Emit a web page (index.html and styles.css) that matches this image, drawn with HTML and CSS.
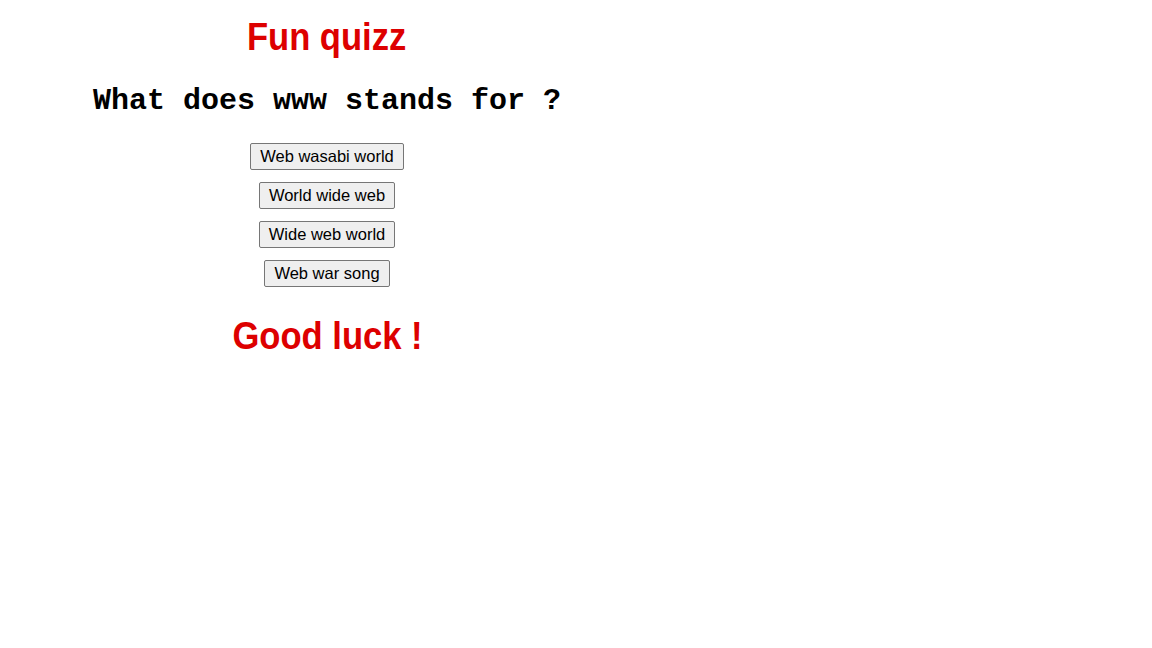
FILE: index.html
```html
<!DOCTYPE html>
<html>
<head>
<meta charset="utf-8">
<link rel="stylesheet" href="styles.css">
</head>
<body>
<div class="quiz">
  <h1 class="title"><span class="title-text">Fun quizz</span></h1>
  <h2 class="question">What does www stands for ?</h2>
  <div class="answers">
    <button class="answer">Web wasabi world</button>
    <button class="answer">World wide web</button>
    <button class="answer">Wide web world</button>
    <button class="answer">Web war song</button>
  </div>
  <h1 class="title luck"><span class="title-text">Good luck !</span></h1>
</div>
</body>
</html>
```
FILE: styles.css
```css
body {
  margin: 8px;
  background: #fff;
  font-family: "Liberation Sans", Arial, sans-serif;
}
.quiz {
  width: 638px;
  text-align: center;
}
.title {
  font-family: "Liberation Sans", Arial, sans-serif;
  font-weight: bold;
  font-size: 38px;
  color: #dd0000;
  margin: 6px 0 0;
  line-height: 46px;
}
.title-text {
  display: inline-block;
  transform: scaleX(0.91);
  transform-origin: center;
}
.question {
  font-family: "Liberation Mono", "Courier New", monospace;
  font-weight: bold;
  font-size: 30px;
  margin: 23px 0 0;
  line-height: 36px;
}
.answers {
  display: flex;
  flex-direction: column;
  align-items: center;
  gap: 12px;
  margin-top: 24px;
}
.answer {
  font-family: "Liberation Sans", Arial, sans-serif;
  font-size: 16.5px;
  height: 27px;
  padding: 0 9px;
  color: #000;
  background: #efefef;
  border: 1px solid #767676;
  border-radius: 2px;
}
.luck {
  margin-top: 26px;
}
```
